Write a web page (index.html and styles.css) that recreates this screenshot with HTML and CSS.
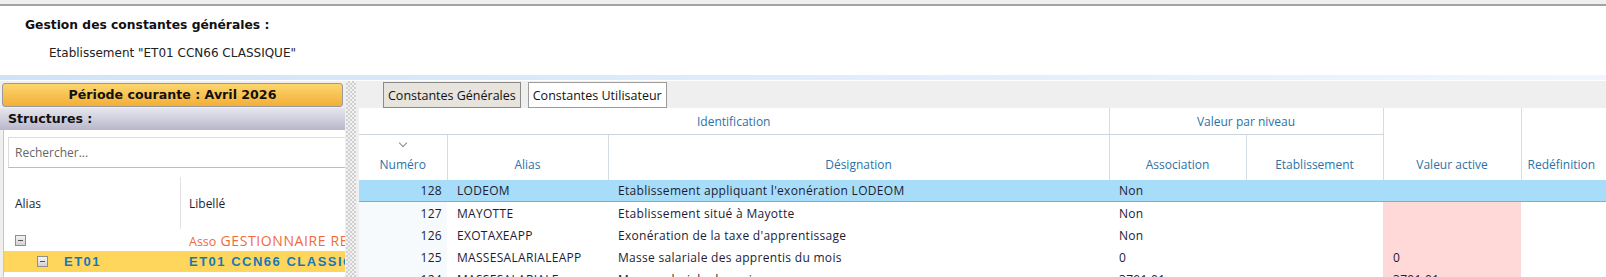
FILE: index.html
```html
<!DOCTYPE html>
<html lang="fr">
<head>
    <meta charset="UTF-8" />
    <title>Gestion des constantes générales</title>
    <link rel="stylesheet" href="styles.css">
</head>
<body>
    <div class="topline"></div>
    <div class="header">
        <div class="header-title">Gestion des constantes générales :</div>
        <div class="header-sub">Etablissement "ET01 CCN66 CLASSIQUE"</div>
    </div>
    <div class="bluebar"></div>

    <div class="main">
        <div class="left">
            <div class="period">Période courante : Avril 2026</div>
            <div class="structures">Structures :</div>
            <div class="tree">
                <div class="search">Rechercher...</div>
                <div class="tree-head">
                    <div class="tree-col-alias">Alias</div>
                    <div class="tree-col-label">Libellé</div>
                </div>
                <div class="tree-row">
                    <div class="tree-col-alias"><span class="toggle"></span></div>
                    <div class="tree-col-label asso"><span class="asso-small">Asso</span> GESTIONNAIRE RE</div>
                </div>
                <div class="tree-row current">
                    <div class="tree-col-alias"><span class="toggle indent"></span>ET01</div>
                    <div class="tree-col-label">ET01 CCN66 CLASSIQUE</div>
                </div>
            </div>
        </div>

        <div class="splitter"></div>

        <div class="right">
            <div class="tabs">
                <button class="tab active">Constantes Générales</button>
                <button class="tab">Constantes Utilisateur</button>
            </div>
            <div class="grid">
                <table>
                    <colgroup>
                        <col class="c-num"><col class="c-alias"><col class="c-desig">
                        <col class="c-asso"><col class="c-etab"><col class="c-active"><col class="c-redef">
                    </colgroup>
                    <thead>
                        <tr class="group">
                            <th colspan="3">Identification</th>
                            <th colspan="2" class="sep">Valeur par niveau</th>
                            <th rowspan="2" class="sep low">Valeur active</th>
                            <th rowspan="2" class="sep low">Redéfinition</th>
                        </tr>
                        <tr class="cols">
                            <th class="sorted"><span class="chevron"></span>Numéro</th>
                            <th class="sep">Alias</th>
                            <th class="sep">Désignation</th>
                            <th class="sep">Association</th>
                            <th class="sep">Etablissement</th>
                        </tr>
                    </thead>
                    <tbody>
                        <tr class="selected">
                            <td class="num">128</td><td>LODEOM</td><td>Etablissement appliquant l'exonération LODEOM</td>
                            <td>Non</td><td></td><td></td><td></td>
                        </tr>
                        <tr>
                            <td class="num">127</td><td>MAYOTTE</td><td>Etablissement situé à Mayotte</td>
                            <td>Non</td><td></td><td class="warn"></td><td></td>
                        </tr>
                        <tr>
                            <td class="num">126</td><td>EXOTAXEAPP</td><td>Exonération de la taxe d'apprentissage</td>
                            <td>Non</td><td></td><td class="warn"></td><td></td>
                        </tr>
                        <tr>
                            <td class="num">125</td><td>MASSESALARIALEAPP</td><td>Masse salariale des apprentis du mois</td>
                            <td>0</td><td></td><td class="warn">0</td><td></td>
                        </tr>
                        <tr>
                            <td class="num">124</td><td>MASSESALARIALE</td><td>Masse salariale du mois</td>
                            <td>3791,01</td><td></td><td class="warn">3791,01</td><td></td>
                        </tr>
                    </tbody>
                </table>
            </div>
        </div>
    </div>
</body>
</html>
```

FILE: styles.css
```css
body {
    margin: 0;
    height: 277px;
    overflow: hidden;
    background: #efefef;
    font-family: "Open Sans", "Liberation Sans", sans-serif;
    font-size: 12px;
    color: #1e1e2e;
}

.topline {
    height: 4px;
    background: #efefef;
    border-bottom: 2px solid #a3a3a3;
}

.header {
    height: 58px;
    padding: 11px 0 0 25px;
    background: #fff;
    font-family: "DejaVu Sans", sans-serif;
}

.header-title {
    font-weight: bold;
    font-size: 12.3px;
    line-height: 16px;
    color: #111;
}

.header-sub {
    margin: 12px 0 0 24px;
    font-size: 12px;
    line-height: 16px;
    color: #222;
}

.bluebar {
    height: 5px;
    border-bottom: 1px solid #fff;
    background: linear-gradient(to right, #cfe3f8, #f0f6fd);
}

.main {
    display: flex;
    height: 196px;
}

/* left column */
.left {
    width: 345px;
    flex: none;
    display: flex;
    flex-direction: column;
}

.period,
.structures {
    font-family: "DejaVu Sans", sans-serif;
    font-weight: bold;
    font-size: 12.6px;
    color: #111;
}

.period {
    margin: 2px 2px 0;
    height: 22px;
    line-height: 22px;
    text-align: center;
    border: 1px solid #9a9a9a;
    border-radius: 3px;
    background: linear-gradient(#fcd66e, #f3ae38);
}

.structures {
    margin-top: 1px;
    height: 22px;
    line-height: 22px;
    padding-left: 8px;
    background: linear-gradient(#e6e6ef, #b7b7cb);
}

.tree {
    flex: 1;
    background: #fff;
    border-left: 1px solid #c8c8c8;
    margin-left: 3px;
    padding-top: 7px;
}

.search {
    margin-left: 4px;
    height: 29px;
    line-height: 29px;
    padding-left: 6px;
    border: 1px solid #dcdcdc;
    border-bottom-color: #bcbcbc;
    border-right: none;
    color: #666;
}

.tree-head,
.tree-row {
    display: flex;
}

.tree-head {
    height: 52px;
    margin-top: 9px;
    align-items: center;
}

.tree-head .tree-col-label {
    border-left: 1px solid #e2e2e2;
    height: 100%;
    display: flex;
    align-items: center;
    padding-left: 8px;
}

.tree-col-alias {
    width: 165px;
    padding-left: 11px;
    display: flex;
    align-items: center;
}

.tree-col-label {
    flex: 1;
    padding-left: 9px;
    white-space: nowrap;
    overflow: hidden;
}

.tree-row {
    height: 22px;
    align-items: center;
}

.asso {
    color: #f06a3a;
    font-size: 14px;
    letter-spacing: 0.6px;
}

.asso-small {
    font-size: 12.5px;
    letter-spacing: 0;
}

.tree-row.current {
    height: 21px;
    background: #fed65c;
    color: #1779b8;
    font-family: "Liberation Sans", sans-serif;
    font-weight: bold;
    font-size: 13px;
    letter-spacing: 1.5px;
}

.toggle {
    width: 9px;
    height: 9px;
    border: 1px solid #8e8e8e;
    background: linear-gradient(#f4f4f4, #d2d2d2);
    position: relative;
    margin-right: 16px;
}

.toggle::after {
    content: "";
    position: absolute;
    left: 2px;
    right: 2px;
    top: 4px;
    height: 1px;
    background: #555;
}

.toggle.indent {
    margin-left: 22px;
}

.splitter {
    width: 10px;
    margin-left: 1px;
    flex: none;
    background: repeating-conic-gradient(#d0d0d0 0 25%, #f2f2f2 0 50%) 0 0 / 4px 4px;
}

/* right column */
.right {
    flex: 1;
    min-width: 0;
    display: flex;
    flex-direction: column;
    padding-left: 3px;
}

.tabs {
    display: flex;
    gap: 7px;
    padding: 1px 0 0 24px;
    height: 26px;
}

.tab {
    font: inherit;
    font-size: 12.5px;
    color: #111;
    padding: 0 4px;
    height: 26px;
    border: 1px solid #9c9c9c;
    background: #fff;
}

.tab.active {
    background: #e7e3dd;
    border-color: #8a8a8a;
}

.grid {
    flex: 1;
    background: #fff;
    overflow: hidden;
}

table {
    border-collapse: collapse;
    table-layout: fixed;
    width: 1350px;
}

.c-num { width: 88px; }
.c-alias { width: 161px; }
.c-desig { width: 501px; }
.c-asso { width: 137px; }
.c-etab { width: 137px; }
.c-active { width: 138px; }
.c-redef { width: 188px; }

th {
    font-weight: normal;
    color: #2d72a6;
    padding: 0;
}

.group th {
    height: 26px;
    border-bottom: 1px solid #cbd6dd;
    vertical-align: middle;
}

.group th.low {
    vertical-align: bottom;
    padding-bottom: 7px;
    border-bottom: none;
}

.group th.low:last-child {
    text-align: left;
    padding-left: 6px;
}

th.sep {
    border-left: 1px solid #d3dde3;
}

.cols th {
    height: 38px;
    vertical-align: bottom;
    padding-bottom: 7px;
}

.sorted {
    position: relative;
}

.chevron {
    position: absolute;
    left: 41px;
    top: 5px;
    width: 5px;
    height: 5px;
    border-right: 1px solid #8a8a8a;
    border-bottom: 1px solid #8a8a8a;
    transform: rotate(45deg);
}

td {
    height: 22px;
    padding: 0 10px;
    white-space: nowrap;
    overflow: hidden;
    letter-spacing: 0.3px;
    color: #1c1c34;
}

td.num {
    text-align: right;
    padding-right: 5px;
    background: #f6fafd;
}

.selected td,
.selected td.num {
    background: #a7ddf9;
    border-bottom: 1px solid #5bb9f1;
    height: 21px;
}

td.warn {
    background: #ffd8d8;
}
```
